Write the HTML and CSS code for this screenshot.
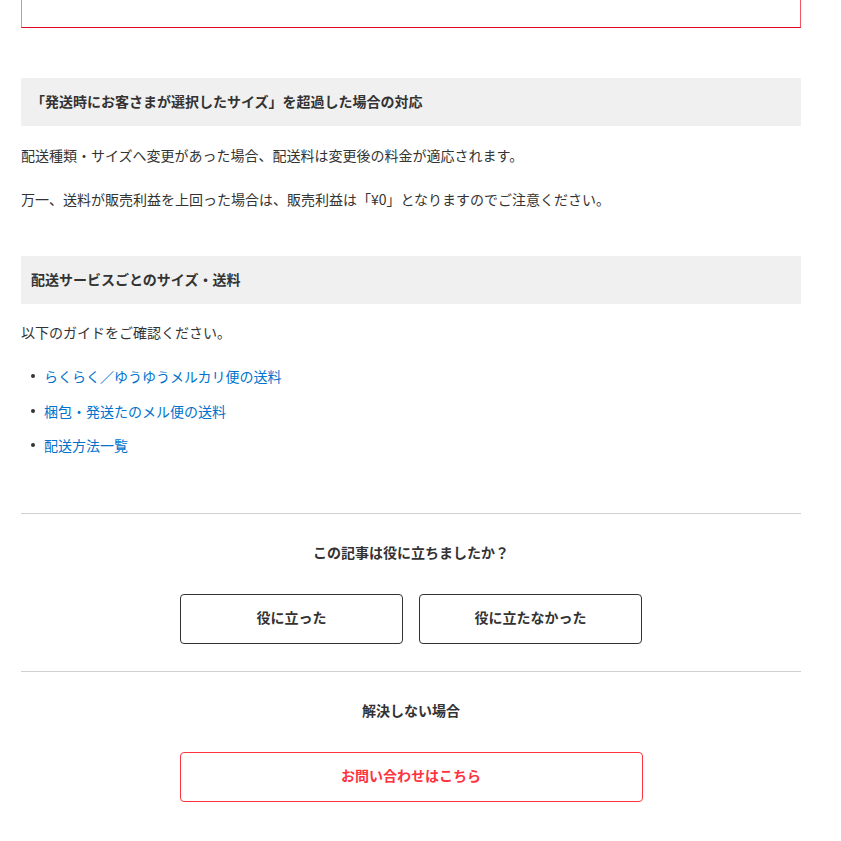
FILE: index.html
```html
<!DOCTYPE html>
<html lang="ja">
<head>
<meta charset="utf-8">
<title>配送サービスごとのサイズ・送料</title>
<link rel="stylesheet" href="styles.css">
</head>
<body>
<main class="article">
  <div class="notice-box">
    <p class="notice-text">発送前　注意点</p>
  </div>

  <h2 class="section-title section-first">「発送時にお客さまが選択したサイズ」を超過した場合の対応</h2>
  <p class="text text-first">配送種類・サイズへ変更があった場合、配送料は変更後の料金が適応されます。</p>
  <p class="text">万一、送料が販売利益を上回った場合は、販売利益は「¥0」となりますのでご注意ください。</p>

  <h2 class="section-title section-second">配送サービスごとのサイズ・送料</h2>
  <p class="text text-first">以下のガイドをご確認ください。</p>
  <ul class="guide-list">
    <li class="guide-item"><a class="guide-link" href="#">らくらく／ゆうゆうメルカリ便の送料</a></li>
    <li class="guide-item"><a class="guide-link" href="#">梱包・発送たのメル便の送料</a></li>
    <li class="guide-item"><a class="guide-link" href="#">配送方法一覧</a></li>
  </ul>

  <section class="feedback">
    <p class="feedback-title">この記事は役に立ちましたか？</p>
    <div class="feedback-buttons">
      <button class="btn btn-outline">役に立った</button>
      <button class="btn btn-outline">役に立たなかった</button>
    </div>
  </section>

  <section class="contact">
    <p class="contact-title">解決しない場合</p>
    <div class="contact-row">
      <a class="btn btn-contact" href="#">お問い合わせはこちら</a>
    </div>
  </section>
</main>
</body>
</html>
```

FILE: styles.css
```css
* { box-sizing: border-box; }
html, body {
  margin: 0;
  padding: 0;
  background: #fff;
  overflow: hidden;
}
body {
  font-family: "Noto Sans CJK JP", "Noto Sans", sans-serif;
  font-size: 14px;
  color: #333;
}
.article {
  width: 780px;
  margin-left: 21px;
}
.notice-box {
  margin-top: -20px;
  border: 1px solid #e0061f;
  border-left-color: #f7838e;
  border-right-color: #f45563;
  padding: 1px 20px 25px 62px;
}
.notice-text {
  margin: 0;
  line-height: 20px;
  color: #c4c4c4;
}
.section-title {
  margin: 0;
  background: #f1f0f0;
  height: 48px;
  line-height: 47px;
  padding: 0 10px;
  font-size: 14px;
  font-weight: 700;
  color: #333;
}
.section-first { margin-top: 50px; }
.section-second { margin-top: 45px; }
.text {
  margin: 20px 0 0;
  line-height: 24px;
}
.text-first { margin-top: 16px; }
.notice-box + .section-title + .text-first { margin-top: 17px; }
.guide-list {
  list-style: none;
  margin: 20px 0 0;
  padding: 0;
}
.guide-item {
  display: flex;
  align-items: center;
  line-height: 24px;
  margin-top: 10.5px;
}
.guide-item:first-child { margin-top: 0; }
.guide-item::before {
  content: "";
  width: 4px;
  height: 4px;
  border-radius: 50%;
  background: #333;
  margin: 0 9px 0 10px;
  flex: none;
}
.guide-link {
  color: #0073cc;
  text-decoration: none;
}
.feedback {
  margin-top: 56px;
  border-top: 1px solid #d0d0d0;
  text-align: center;
}
.feedback-title {
  margin: 26px 0 0;
  line-height: 24px;
  font-weight: 700;
}
.feedback-buttons {
  display: flex;
  justify-content: center;
  gap: 16px;
  margin-top: 30px;
}
.btn {
  display: flex;
  align-items: center;
  justify-content: center;
  height: 50px;
  border-radius: 4px;
  background: #fff;
  font-family: inherit;
  font-size: 14px;
  font-weight: 700;
  text-decoration: none;
  padding: 0 0 4px;
}
.btn-outline {
  width: 223px;
  border: 1px solid #333;
  color: #333;
}
.contact {
  margin-top: 27px;
  border-top: 1px solid #d0d0d0;
  text-align: center;
}
.contact-title {
  margin: 26px 0 0;
  line-height: 24px;
  font-weight: 700;
}
.contact-row {
  display: flex;
  justify-content: center;
  margin-top: 30px;
}
.btn-contact {
  width: 463px;
  border: 1px solid #ff333f;
  color: #ff333f;
}
```
